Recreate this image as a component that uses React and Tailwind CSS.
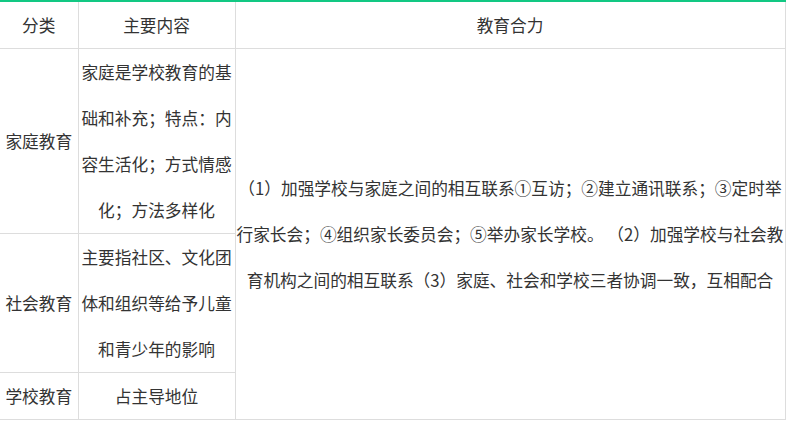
const rows = [
  {
    kind: '家庭教育',
    content: '家庭是学校教育的基础和补充；特点：内容生活化；方式情感化；方法多样化',
  },
  {
    kind: '社会教育',
    content: '主要指社区、文化团体和组织等给予儿童和青少年的影响',
  },
  {
    kind: '学校教育',
    content: '占主导地位',
  },
];

// 教育合力 — line breaks follow the original layout
const hejiLines = [
  '（1）加强学校与家庭之间的相互联系①互访；②建立通讯联系；③定时举',
  '行家长会；④组织家长委员会；⑤举办家长学校。 （2）加强学校与社会教',
  '育机构之间的相互联系（3）家庭、社会和学校三者协调一致，互相配合',
];

const cell = 'border-r border-b border-[#dddddd] text-center align-middle leading-[46px] px-0';

export default function App() {
  return (
    <div className="min-h-screen bg-white text-[#333333] text-[16.7px]" style={{ fontFamily: '"Microsoft YaHei", "Noto Sans CJK SC", sans-serif' }}>
      <table className="table-fixed border-collapse w-[785px] border-t-2 border-t-[#12c883]">
        <colgroup>
          <col className="w-[78px]" />
          <col className="w-[157px]" />
          <col className="w-[550px]" />
        </colgroup>
        <thead>
          <tr>
            <th className={`${cell} font-normal`}>分类</th>
            <th className={`${cell} font-normal`}>主要内容</th>
            <th className={`${cell} font-normal`}>教育合力</th>
          </tr>
        </thead>
        <tbody>
          {rows.map((r, i) => (
            <tr key={r.kind}>
              <td className={cell}>{r.kind}</td>
              <td className={`${cell} px-[2px]`}>{r.content}</td>
              {i === 0 && (
                <td rowSpan={3} className={`${cell} px-0 whitespace-pre`}>
                  {hejiLines.map((l, j) => (
                    <span key={j}>
                      {l}
                      {j < hejiLines.length - 1 && <br />}
                    </span>
                  ))}
                </td>
              )}
            </tr>
          ))}
        </tbody>
      </table>
    </div>
  );
}
